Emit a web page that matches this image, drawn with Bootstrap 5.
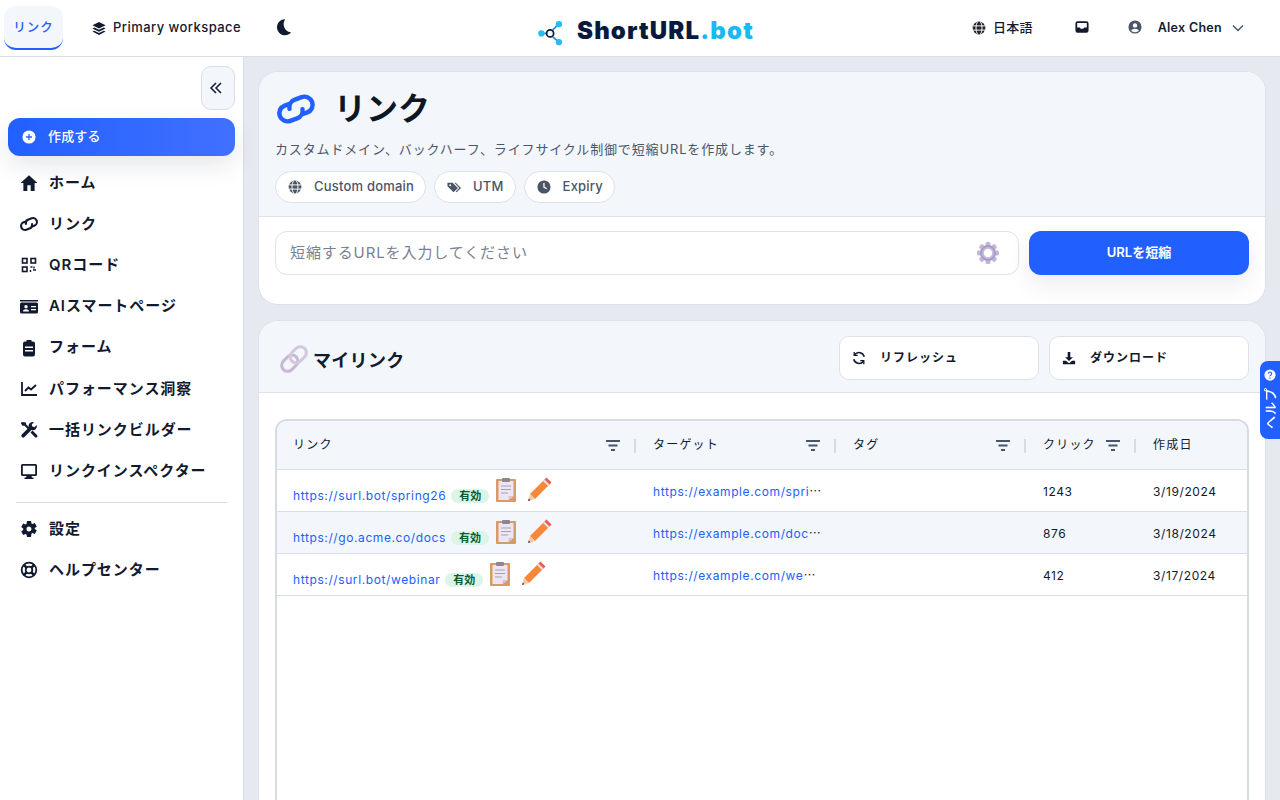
<!DOCTYPE html>
<html lang="ja">
<head>
<meta charset="UTF-8">
<title>ShortURL.bot</title>
<link href="https://cdn.jsdelivr.net/npm/bootstrap@5.3.0/dist/css/bootstrap.min.css" rel="stylesheet">
<style>
html, body { height: 100%; overflow: hidden; }
body { font-family: Inter, "Noto Sans CJK JP", sans-serif; color: #111a2e; background: #e6e9f0; letter-spacing: .5px; text-rendering: optimizeSpeed; }
svg { display: block; flex: none; }
.topbar { height: 57px; background: #fff; border-bottom: 1px solid #d9deea; padding: 0 4px; }
.top-tab { width: 59px; height: 44px; margin-top: 6px; padding-top: 3px; background: #f3f6fb; border-radius: 12px; border-bottom: 2px solid #2160ff; color: #2160ff; font-size: 12.5px; font-weight: 500; letter-spacing: 1px; }
.top-item { font-size: 13px; font-weight: 500; color: #111a2e; }
.logo-text { font-size: 24px; font-weight: 900; color: #071a3d; letter-spacing: 1.15px; line-height: 1; }
.logo-text span { color: #1ab9f2; }
.logo-wrap { left: 537px; top: 16px; gap: 12px; }
.shell { height: 743px; }
.side { width: 244px; background: #fff; border-right: 1px solid #d9deea; padding: 9px 8px 0; }
.collapse-btn { width: 34px; height: 44px; padding-right: 4px; background: #f3f6fb; border: 1px solid #d9deea; border-radius: 10px; margin-left: 193px; }
.create-btn { height: 38px; margin-top: 8px; margin-bottom: 6.6px; padding-left: 14px; gap: 12px; border-radius: 12px; background: linear-gradient(90deg, #2160ff, #4170ff); color: #fff; font-size: 13px; font-weight: 500; letter-spacing: .15px; box-shadow: 0 10px 24px rgba(20, 30, 60, .1); }
.side-link { height: 41.15px; padding-left: 12px; gap: 11px; font-size: 15px; font-weight: 600; letter-spacing: .95px; color: #111a2e; text-decoration: none; }
.side-rule { margin: 10px 8px 6px; border-top: 1px solid #d9dbe3; opacity: 1; }
.content { padding: 14px 14px 0 14px; gap: 15px; min-width: 0; }
.panel { background: #fff; border: 1px solid #dde1ea; border-radius: 20px; overflow: hidden; }
.panel-top { background: #f3f6fb; border-bottom: 1px solid #dde1ea; }
.hero-head { height: 145px; padding: 15px 16px 0; }
.hero-title { font-size: 32px; font-weight: 600; letter-spacing: 0; line-height: 44px; margin: 0; color: #0e1624; }
.hero-sub { font-size: 13px; color: #4a5568; letter-spacing: .85px; margin: 8px 0 12px; line-height: 20px; }
.chip { height: 32px; padding: 0 11px 0 12px; gap: 12px; background: #fff; border: 1px solid #dde1ea; border-radius: 16px; font-size: 13px; font-weight: 500; letter-spacing: .2px; color: #4a5568; }
.hero-body { height: 87px; padding: 14px 16px 0; gap: 10px; }
.url-field { height: 44px; padding: 0 18px 0 14px; border: 1px solid #dde1ea; border-radius: 12px; color: #7b8190; font-size: 15px; letter-spacing: .9px; }
.short-btn { width: 220px; height: 44px; background: #2160ff; border: 0; border-radius: 12px; color: #fff; font-size: 13px; font-weight: 600; letter-spacing: 0; box-shadow: 0 10px 24px rgba(20, 30, 60, .08); }
.list-head { height: 72px; padding: 0 16px 0 20px; }
.list-title { font-size: 18px; font-weight: 700; margin: 8px 0 0; letter-spacing: .3px; }
.plain-btn { width: 200px; height: 44px; padding-left: 12px; gap: 14px; background: #fff; border: 1px solid #dde1ea; border-radius: 10px; font-size: 12px; font-weight: 600; letter-spacing: 1px; color: #111a2e; }
.table-box { margin: 26px 16px 0; border: 2px solid #d6dbe8; border-bottom: 0; border-radius: 12px 12px 0 0; height: 400px; overflow: hidden; }
.link-table { table-layout: fixed; width: 970px; margin: 0; font-size: 12px; }
.link-table th { height: 48px; background: #f3f6fb; font-weight: 400; font-size: 12px; padding: 0 16px; letter-spacing: 1.2px; vertical-align: middle; position: relative; border-bottom: 1px solid #d9deea; color: #111a2e; }
.link-table td { height: 42px; padding: 3px 16px 0; vertical-align: middle; border-bottom: 1px solid #d9deea; color: #111a2e; background: transparent; box-shadow: none; letter-spacing: .6px; }
.link-table tr.alt td { background: #f3f6fb; }
.filter-mark { position: absolute; right: 17px; top: 19px; }
.col-rule { position: absolute; right: 1px; top: 18px; width: 2px; height: 14px; background: #d6dbe8; }
.url-link { color: #2160ff; text-decoration: none; font-family: Inter, sans-serif; }
.trunc { width: 169.5px; overflow: hidden; white-space: nowrap; text-overflow: ellipsis; font-family: "Noto Sans CJK JP", sans-serif; }
.state-pill { background: #dbf5e7; color: #0c5a35; font-size: 11px; font-weight: 600; border-radius: 8px; padding: 0 8px; line-height: 14px; letter-spacing: 0; height: 14px; margin-top: 9px; }
.help-tab { position: fixed; right: 0; top: 361px; width: 20px; height: 78px; padding-top: 8px; gap: 6px; background: #2160ff; border-radius: 8px 0 0 8px; color: #fff; font-size: 13px; font-weight: 500; }
.help-tab span { writing-mode: vertical-rl; text-orientation: sideways; transform: rotate(180deg); letter-spacing: 1px; line-height: 1; }
</style>
</head>
<body>
<svg width="0" height="0" class="position-absolute">
  <symbol id="i-globe" viewBox="0 0 16 16"><circle cx="8" cy="8" r="7.3" fill="currentColor"/><path d="M1 5.6h14M1 10.4h14M6.2 1c-2.2 4-2.2 10 0 14M9.8 1c2.2 4 2.2 10 0 14" fill="none" stroke="#fff" stroke-width="1.1"/></symbol>
  <symbol id="i-link" viewBox="0 0 16 16"><path d="M6.400 5.300H4.400a3.100 3.100 0 0 0 0 6.200h2.800a3.100 3.100 0 0 0 3.100-2.600M9.600 10.700h2a3.100 3.100 0 0 0 0-6.200H8.800a3.100 3.100 0 0 0-3.100 2.600" transform="rotate(-20 8 8)" fill="none" stroke="currentColor" stroke-width="1.700" stroke-linecap="round"/></symbol>
</svg>

<header class="topbar d-flex align-items-start position-relative">
  <div class="top-tab d-flex align-items-center justify-content-center">リンク</div>
  <div class="top-item d-flex align-items-center" style="margin:18px 0 0 29px;gap:7px;letter-spacing:.45px">
    <svg width="14" height="14" viewBox="0 0 16 16" fill="currentColor"><path d="M8 1 15.5 4.8 8 8.6.5 4.8z"/><path d="M2.6 7.4 8 10.1l5.4-2.7 2.1 1.1L8 12.3.5 8.5z"/><path d="M2.6 11 8 13.7l5.4-2.7 2.1 1.1L8 15.9.5 12.1z"/></svg>
    <span>Primary workspace</span>
  </div>
  <svg style="margin:18px 0 0 34px" width="17" height="18" viewBox="0 0 16 16" fill="#111a2e"><path d="M9.6.6a7.600 7.600 0 1 0 5.600 12.600A8 8 0 0 1 9.600.6z"/></svg>
  <div class="logo-wrap position-absolute d-flex align-items-center">
    <svg width="28" height="27" viewBox="0 0 32 30" style="margin-top:3px"><path d="M6 16h6M18 12l6-6M18 20l6 5" stroke="#2a8fd8" stroke-width="2"/><circle cx="5" cy="16" r="3.6" fill="#24bdf5"/><circle cx="25" cy="5.500" r="3.6" fill="#24bdf5"/><circle cx="25" cy="26" r="3.600" fill="#24bdf5"/><circle cx="15" cy="16" r="4" fill="#fff" stroke="#0b1a3a" stroke-width="2"/></svg>
    <div class="logo-text">ShortURL<span>.bot</span></div>
  </div>
  <div class="top-item d-flex align-items-center ms-auto" style="margin-top:18px;gap:7px;letter-spacing:.2px">
    <svg class="text-dark" width="14" height="14" viewBox="0 0 16 16"><use href="#i-globe"/></svg><span>日本語</span>
  </div>
  <svg style="margin:20px 0 0 42px" width="14" height="14" viewBox="0 0 16 16" fill="#111a2e"><path d="M3 1.500h10a2.500 2.500 0 0 1 2.500 2.500v8a2.500 2.500 0 0 1-2.500 2.500H3A2.500 2.500 0 0 1 .5 12V4A2.500 2.500 0 0 1 3 1.500zM2.500 3.500v5h3l1 1.500h3l1-1.500h3v-5z" fill-rule="evenodd"/></svg>
  <svg style="margin:20px 0 0 39px;color:#4a5568" width="14" height="14" viewBox="0 0 16 16" fill="currentColor"><path fill-rule="evenodd" d="M8 .5a7.500 7.500 0 1 0 0 15 7.500 7.500 0 0 0 0-15zm0 3.200a2.500 2.500 0 1 1 0 5 2.500 2.500 0 0 1 0-5zM3.500 12.300c.7-1.500 2.400-2.300 4.500-2.300s3.800.8 4.500 2.300A6 6 0 0 1 8 14a6 6 0 0 1-4.500-1.700z"/></svg>
  <div class="top-item" style="margin:19px 0 0 16px;font-weight:600;font-size:12.5px;letter-spacing:.3px">Alex Chen</div>
  <svg style="margin:22px 32px 0 10px" width="12" height="12" viewBox="0 0 12 12" fill="none" stroke="#4a5568" stroke-width="1.500"><path d="M1 3.500 6 8.500l5-5"/></svg>
</header>

<div class="shell d-flex">
  <aside class="side flex-shrink-0">
    <div class="collapse-btn d-flex align-items-center justify-content-center">
      <svg width="14" height="14" viewBox="0 0 14 14" fill="none" stroke="#111a2e" stroke-width="1.500"><path d="M7 2 2 7l5 5M12 2 7 7l5 5"/></svg>
    </div>
    <div class="create-btn d-flex align-items-center">
      <svg width="14" height="14" viewBox="0 0 16 16"><circle cx="8" cy="8" r="7.500" fill="#fff"/><path d="M8 4.500v7M4.500 8h7" stroke="#2a62ff" stroke-width="1.500"/></svg>
      <span>作成する</span>
    </div>
    <nav class="nav flex-column" id="sideNav"></nav>
  </aside>

  <main class="content flex-grow-1 d-flex flex-column">
    <section class="panel flex-shrink-0">
      <div class="panel-top hero-head">
        <div class="d-flex align-items-center" style="gap:17px">
          <svg width="42" height="42" viewBox="0 0 16 16" style="color:#2160ff"><use href="#i-link"/></svg>
          <h1 class="hero-title">リンク</h1>
        </div>
        <p class="hero-sub">カスタムドメイン、バックハーフ、ライフサイクル制御で短縮URLを作成します。</p>
        <div class="d-flex gap-2">
          <div class="chip d-flex align-items-center"><svg width="14" height="14" viewBox="0 0 16 16"><use href="#i-globe"/></svg>Custom domain</div>
          <div class="chip d-flex align-items-center"><svg width="14" height="14" viewBox="0 0 16 16" fill="currentColor"><path d="M.5 3h6l6 6-5 5-7-7zM8.500 3h1.500l6 6-5 5-1-1 4-4z"/><circle cx="3.600" cy="6" r="1.100" fill="#f3f6fb"/></svg>UTM</div>
          <div class="chip d-flex align-items-center"><svg width="14" height="14" viewBox="0 0 16 16" fill="currentColor"><path fill-rule="evenodd" d="M8 .5a7.500 7.500 0 1 0 0 15 7.500 7.500 0 0 0 0-15zM7.200 3.500h1.500v4.200l2.800 1.700-.8 1.200-3.500-2.100z"/></svg>Expiry</div>
        </div>
      </div>
      <div class="hero-body d-flex">
        <div class="url-field flex-grow-1 d-flex align-items-center justify-content-between">
          <span>短縮するURLを入力してください</span>
          <svg width="24" height="24" viewBox="0 0 24 24"><g fill="#c3b7d8"><circle cx="12" cy="12" r="8"/><g><rect x="9.500" y="1" width="5" height="5" rx="1.500"/><rect x="9.500" y="18" width="5" height="5" rx="1.500"/><rect x="1" y="9.500" width="5" height="5" rx="1.500"/><rect x="18" y="9.500" width="5" height="5" rx="1.500"/><rect x="9.500" y="1" width="5" height="5" rx="1.500" transform="rotate(45 12 12)"/><rect x="9.500" y="18" width="5" height="5" rx="1.500" transform="rotate(45 12 12)"/><rect x="1" y="9.500" width="5" height="5" rx="1.500" transform="rotate(45 12 12)"/><rect x="18" y="9.500" width="5" height="5" rx="1.500" transform="rotate(45 12 12)"/></g></g><circle cx="12" cy="12" r="7" fill="none" stroke="#a594c4" stroke-width="1.500"/><circle cx="12" cy="12" r="4.200" fill="#fff"/></svg>
        </div>
        <button class="short-btn flex-shrink-0" type="button">URLを短縮</button>
      </div>
    </section>

    <section class="panel flex-grow-1" style="border-radius:20px 20px 0 0;border-bottom:0">
      <div class="panel-top list-head d-flex align-items-center">
        <svg width="32" height="32" viewBox="0 0 32 32" style="margin:4px 3px 0 -1px"><g transform="rotate(-45 16 16)" fill="none"><rect x="1" y="10" width="18" height="12" rx="6" stroke="#c5b9d3" stroke-width="3"/><rect x="13" y="10" width="18" height="12" rx="6" stroke="#d3c9de" stroke-width="3"/></g></svg>
        <h2 class="list-title">マイリンク</h2>
        <div class="ms-auto d-flex" style="gap:10px;margin-top:2px">
          <button class="plain-btn d-flex align-items-center" type="button">
            <svg width="14" height="14" viewBox="0 0 16 16" fill="none" stroke="#111a2e" stroke-width="1.800"><path d="M14 6.500A6.200 6.200 0 0 0 3 4.300M2 9.500a6.200 6.200 0 0 0 11 2.200"/><path d="M2.500 1v4h4M13.500 15v-4h-4" stroke-width="1.500"/></svg>
            <span>リフレッシュ</span>
          </button>
          <button class="plain-btn d-flex align-items-center" type="button">
            <svg width="14" height="14" viewBox="0 0 16 16" fill="#111a2e"><path d="M6.500 1h3v6h3L8 11.500 3.500 7h3z"/><path d="M1 11h3.500L8 14l3.500-3H15v4H1z"/></svg>
            <span>ダウンロード</span>
          </button>
        </div>
      </div>
      <div class="table-box">
        <table class="table link-table">
          <colgroup><col style="width:360px"><col style="width:200px"><col style="width:190px"><col style="width:110px"><col style="width:110px"></colgroup>
          <thead><tr id="headRow"></tr></thead>
          <tbody id="rows"></tbody>
        </table>
      </div>
    </section>
  </main>
</div>

<div class="help-tab d-flex flex-column align-items-center">
  <svg width="12" height="12" viewBox="0 0 16 16"><circle cx="8" cy="8" r="7.500" fill="#fff"/><path d="M5.800 6.200a2.200 2.200 0 1 1 3.400 1.900c-.8.500-1.200.9-1.200 1.700" fill="none" stroke="#2160ff" stroke-width="1.500"/><circle cx="8" cy="12" r="1" fill="#2160ff"/></svg>
  <span>ヘルプ</span>
</div>

<script>
  const c = 'fill="currentColor"';
  const items = [
    ["ホーム", `<svg width="18" height="18" viewBox="0 0 16 16" ${c}><path fill-rule="evenodd" d="M8 1 .5 8H3v7h10V8h2.500zM6.500 10h3v5h-3z"/></svg>`],
    ["リンク", `<svg width="20" height="20" viewBox="0 0 16 16" style="margin:0 -1px"><use href="#i-link"/></svg>`],
    ["QRコード", `<svg width="16" height="16" viewBox="0 0 16 16" fill="none" stroke="currentColor" stroke-width="1.600" style="margin:0 1px"><rect x="1.500" y="1.500" width="4.500" height="4.500"/><rect x="10" y="1.500" width="4.500" height="4.500"/><rect x="1.500" y="10" width="4.500" height="4.500"/><path d="M9.500 10h2M13 9.500v2M9.500 13v2M12 13h3" stroke-width="1.400"/></svg>`],
    ["AIスマートページ", `<svg width="18" height="18" viewBox="0 0 18 18" ${c}><path fill-rule="evenodd" d="M0 2h18v1.500H0zM1.500 4.500h15A1.500 1.500 0 0 1 18 6v8a1.500 1.500 0 0 1-1.500 1.500h-15A1.500 1.500 0 0 1 0 14V6a1.500 1.500 0 0 1 1.500-1.500zM6 7a1.700 1.700 0 1 0 0 3.400A1.700 1.700 0 0 0 6 7zm-3 6.500h6c0-1.500-1.200-2.300-3-2.300s-3 .8-3 2.300zM11 8v1.300h5V8zm0 3v1.300h5V11z"/></svg>`],
    ["フォーム", `<svg width="18" height="18" viewBox="0 0 18 18" ${c}><path fill-rule="evenodd" d="M6.500 1h5v1.500H13A2 2 0 0 1 15 4.500v11a2 2 0 0 1-2 2H5a2 2 0 0 1-2-2v-11a2 2 0 0 1 2-2h1.500zM5 7.500V9h8V7.500zm0 3.500v1.500h8V11z"/></svg>`],
    ["パフォーマンス洞察", `<svg width="18" height="18" viewBox="0 0 18 18" fill="none" stroke="currentColor" stroke-width="1.800"><path d="M2 2v13h15"/><path d="M5 11l3.500-3.500 2.500 2L16 5"/></svg>`],
    ["一括リンクビルダー", `<svg width="18" height="18" viewBox="0 0 18 18" ${c}><path d="M1.500 1 1 2.500l1.500 2.300H4.500L9 9.300l1.500-1.500L6 3.300V1.500z"/><path d="M12.500 1a4 4 0 0 1 1.500.3L11.700 3.600l.7 2 2 .7L16.700 4a4 4 0 0 1-5.300 5L4.500 16a1.800 1.800 0 0 1-2.700-2.500l7-7A4 4 0 0 1 12.500 1z"/><path d="M10.500 11.500 12.500 9.500l4.700 4.700a1.500 1.500 0 0 1-2.200 2z"/></svg>`],
    ["リンクインスペクター", `<svg width="18" height="18" viewBox="0 0 18 18" ${c}><path fill-rule="evenodd" d="M2.500 2h13A1.500 1.500 0 0 1 17 3.500v9a1.500 1.500 0 0 1-1.500 1.500h-4l.5 1.500h1.500V17h-9v-1.500H6L6.500 14h-4A1.500 1.500 0 0 1 1 12.500v-9A1.500 1.500 0 0 1 2.500 2zm.3 1.800v8.400h12.400V3.800z"/></svg>`],
    null,
    ["設定", `<svg width="18" height="18" viewBox="0 0 18 18" ${c}><path fill-rule="evenodd" d="M7 1h4l.5 2.500 1 .5 2.300-1 2 3.400-2 1.600v1l2 1.600-2 3.400-2.300-1-1 .5L11 17H7l-.5-2.500-1-.5-2.300 1-2-3.400 2-1.600V9.500v-1l-2-1.600 2-3.400 2.300 1 1-.5zM9 6.500a2.500 2.500 0 1 0 0 5 2.500 2.500 0 0 0 0-5z"/></svg>`],
    ["ヘルプセンター", `<svg width="18" height="18" viewBox="0 0 18 18" fill="none" stroke="currentColor"><circle cx="9" cy="9" r="7.300" stroke-width="1.800"/><circle cx="9" cy="9" r="3.300" stroke-width="1.800"/><path d="M3.800 3.800l3 3M14.200 3.800l-3 3M3.800 14.200l3-3M14.200 14.200l-3-3" stroke-width="2.600"/></svg>`]
  ];
  document.getElementById("sideNav").innerHTML = items.map(it => it
    ? `<a class="side-link d-flex align-items-center" href="#">${it[1]}<span>${it[0]}</span></a>`
    : `<hr class="side-rule">`).join("");

  const filterIcon = `<svg class="filter-mark" width="14" height="11" viewBox="0 0 14 11" fill="#4a5568"><path d="M0 0h14v2H0zM2.500 4.500h9v2h-9zM5 9h4v2H5z"/></svg>`;
  const heads = [["リンク", 1], ["ターゲット", 1], ["タグ", 1], ["クリック", 1], ["作成日", 0]];
  document.getElementById("headRow").innerHTML = heads.map(h =>
    `<th>${h[0]}${h[1] ? filterIcon + '<i class="col-rule"></i>' : ""}</th>`).join("");

  const clipboard = `<svg width="24" height="26" viewBox="0 0 24 26"><rect x="2" y="2" width="20" height="23" rx="1" fill="#d99a63"/><path d="M4.500 4h15v15l-5 4h-10z" fill="#ece6f2"/><path d="M14.500 23l5-4h-5z" fill="#cfc6da"/><rect x="8" y="1" width="8" height="4" rx="1" fill="#8d8496"/><path d="M7 9h10M7 12.500h10M7 16h7" stroke="#a79fb2" stroke-width="1.200"/></svg>`;
  const pencil = `<svg width="28" height="28" viewBox="0 0 28 28"><path d="M5 18 19 4l5 5-14 14z" fill="#f8873a"/><path d="M19 4l2.500-2.500 5 5L24 9z" fill="#ef5b4c"/><path d="M18 5l1.500-1.500 5 5L23 10z" fill="#e8dfe6"/><path d="M5 18l5 5-7 2z" fill="#f3c9a0"/><path d="M3.800 22.500 3 25l2.500-.8z" fill="#6b2a55"/></svg>`;
  const rows = [
    ["https://surl.bot/spring26", "https://example.com/spring-campaign", "1243", "3/19/2024"],
    ["https://go.acme.co/docs", "https://example.com/docs/getting-started", "876", "3/18/2024"],
    ["https://surl.bot/webinar", "https://example.com/webinar/register", "412", "3/17/2024"]
  ];
  document.getElementById("rows").innerHTML = rows.map((r, i) => `
    <tr class="${i === 1 ? "alt" : ""}">
      <td><div class="d-flex align-items-center" style="gap:5px"><a class="url-link" href="#" style="margin-top:9px">${r[0]}</a><span class="state-pill">有効</span><span style="margin:-3px 0 0">${clipboard}</span><span style="margin:-3px 0 0 2px">${pencil}</span></div></td>
      <td><div class="trunc"><a class="url-link" href="#">${r[1]}</a></div></td>
      <td></td>
      <td>${r[2]}</td>
      <td>${r[3]}</td>
    </tr>`).join("");
</script>
<script src="https://cdn.jsdelivr.net/npm/bootstrap@5.3.0/dist/js/bootstrap.bundle.min.js"></script>
</body>
</html>
